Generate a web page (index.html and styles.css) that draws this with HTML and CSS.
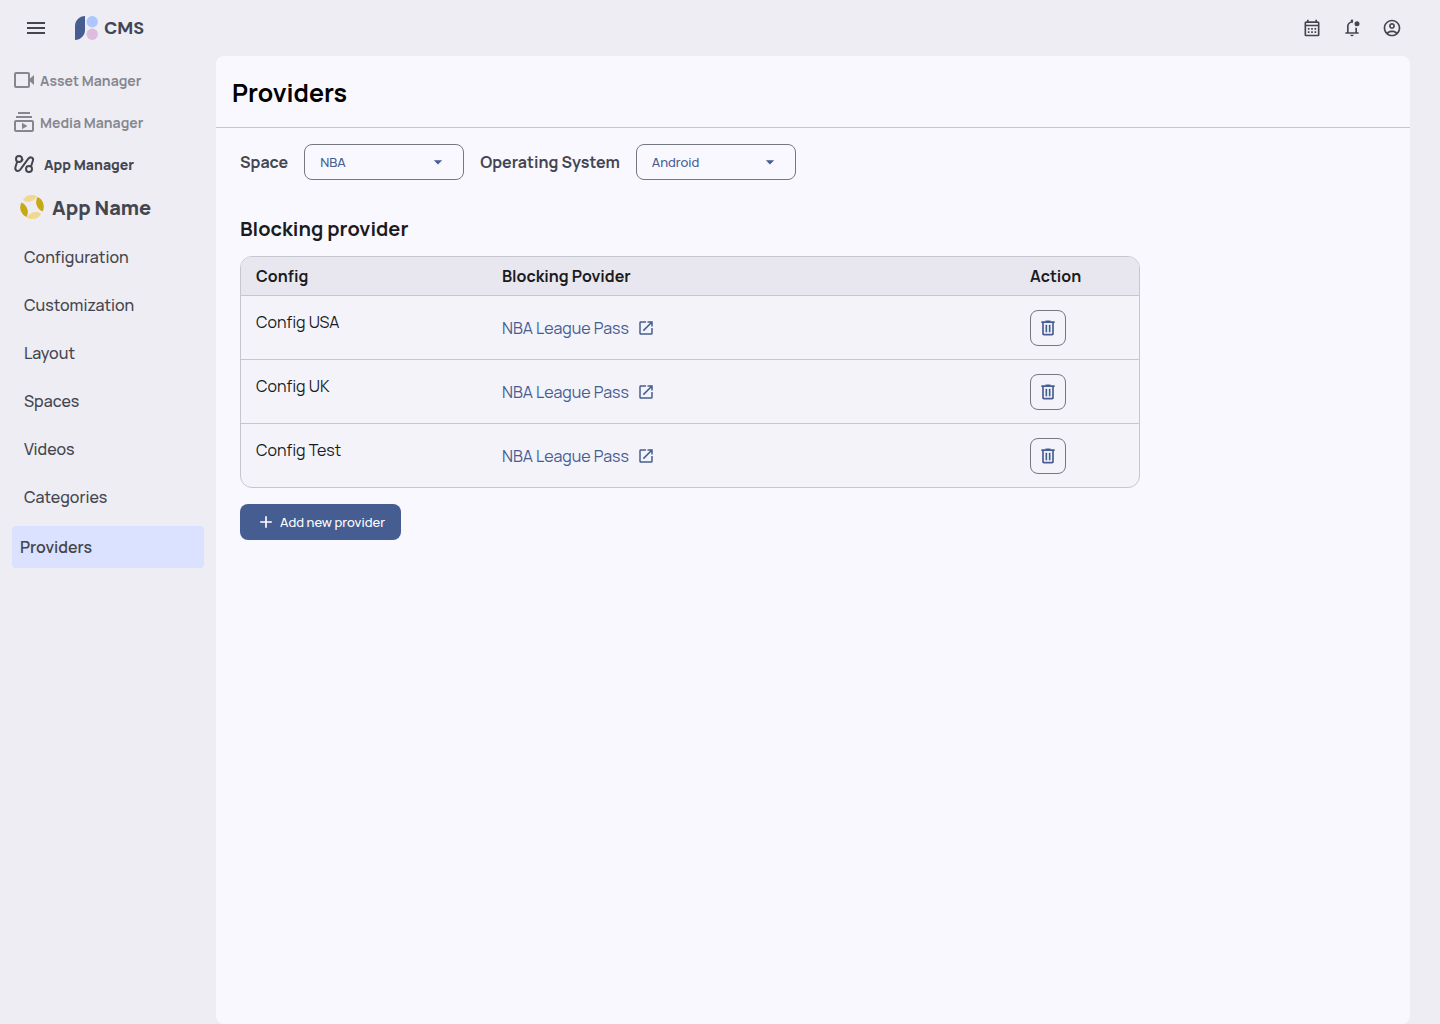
FILE: index.html
```html
<!DOCTYPE html>
<html lang="en">
<head>
  <meta charset="UTF-8" />
  <meta name="viewport" content="width=device-width, initial-scale=1.0"/>
  <title>CMS - Providers</title>
  <link rel="stylesheet" href="styles.css">
</head>
<body>
  <!-- Icons used more than once -->
  <svg class="sprite" aria-hidden="true">
    <symbol id="icon-arrow" viewBox="0 0 24 24"><path d="M7 10l5 5 5-5z"/></symbol>
    <symbol id="icon-open" viewBox="0 0 24 24"><path d="M19 19H5V5h7V3H5c-1.11 0-2 .9-2 2v14c0 1.100.89 2 2 2h14c1.100 0 2-.9 2-2v-7h-2v7zM14 3v2h3.590l-9.830 9.830 1.410 1.410L19 6.410V10h2V3h-7z"/></symbol>
    <symbol id="icon-delete" viewBox="0 0 24 24"><path d="M7 21c-1.100 0-2-.9-2-2V6H4V4h5V3h6v1h5v2h-1v13c0 1.100-.9 2-2 2H7zM17 6H7v13h10V6zM9 17h2V8H9v9zm4 0h2V8h-2v9z"/></symbol>
  </svg>

  <header class="topbar">
    <button class="icon-btn" type="button" aria-label="Menu">
      <svg class="icon" viewBox="0 0 24 24"><path d="M3 18h18v-2H3v2zm0-5h18v-2H3v2zm0-7v2h18V6H3z"/></svg>
    </button>
    <a class="brand" href="#">
      <svg class="brand-logo" viewBox="0 0 24 24">
        <path fill="#465d91" d="M0 24V10C0 4.500 4.500 0 10 0v14c0 5.500-4.500 10-10 10z"/>
        <circle fill="#adc6ff" cx="17.200" cy="5.700" r="5.700"/>
        <circle fill="#debcdf" cx="17.200" cy="18.300" r="5.700"/>
      </svg>
      CMS
    </a>
    <div class="topbar-actions">
      <button class="icon-btn" type="button" aria-label="Calendar">
        <svg class="icon-sm" viewBox="0 0 24 24"><path d="M19 4h-1V2h-2v2H8V2H6v2H5c-1.110 0-1.990.9-1.990 2L3 20c0 1.100.89 2 2 2h14c1.100 0 2-.9 2-2V6c0-1.100-.9-2-2-2zm0 16H5V10h14v10zm0-12H5V6h14v2zM9 14H7v-2h2v2zm4 0h-2v-2h2v2zm4 0h-2v-2h2v2zm-8 4H7v-2h2v2zm4 0h-2v-2h2v2zm4 0h-2v-2h2v2z"/></svg>
      </button>
      <button class="icon-btn" type="button" aria-label="Notifications">
        <svg class="icon-sm" viewBox="0 0 24 24"><path d="M4 19v-2h2v-7c0-2.800 1.900-5.200 4.500-5.800v-.7a1.500 1.500 0 0 1 3-.2A5 5 0 0 0 13 5.900 4 4 0 0 0 8 10v7h8v-5.600a5 5 0 0 0 2 .6v5h2v2H4zm8 3a2 2 0 0 1-2-2h4a2 2 0 0 1-2 2z"/><circle cx="18" cy="7" r="3"/></svg>
      </button>
      <button class="icon-btn" type="button" aria-label="Account">
        <svg class="icon-sm" viewBox="0 0 24 24"><path d="M12 2C6.480 2 2 6.480 2 12s4.480 10 10 10 10-4.480 10-10S17.520 2 12 2zM7.350 18.500C8.660 17.560 10.260 17 12 17s3.340.56 4.650 1.500C15.340 19.440 13.740 20 12 20s-3.340-.56-4.650-1.500zm10.790-1.380C16.450 15.800 14.320 15 12 15s-4.450.8-6.140 2.120C4.700 15.730 4 13.950 4 12c0-4.420 3.580-8 8-8s8 3.580 8 8c0 1.950-.7 3.730-1.860 5.120zM12 6c-1.930 0-3.500 1.570-3.500 3.500S10.070 13 12 13s3.500-1.570 3.500-3.500S13.930 6 12 6zm0 5c-.83 0-1.500-.67-1.500-1.500S11.170 8 12 8s1.500.67 1.500 1.500S12.830 11 12 11z"/></svg>
      </button>
    </div>
  </header>

  <div class="layout">
    <nav class="sidebar">
      <a class="manager-link" href="#">
        <svg class="icon" viewBox="0 0 24 24"><path d="M4 4h12a2 2 0 0 1 2 2v4.500L22 7v10l-4-3.500V18a2 2 0 0 1-2 2H4a2 2 0 0 1-2-2V6a2 2 0 0 1 2-2zm0 2v12h12V6H4z"/></svg>
        Asset Manager
      </a>
      <a class="manager-link" href="#">
        <svg class="icon" viewBox="0 0 24 24"><path d="M20 8H4V6h16v2zm-2-6H6v2h12V2zm4 10v8c0 1.100-.9 2-2 2H4c-1.100 0-2-.9-2-2v-8c0-1.100.9-2 2-2h16c1.100 0 2 .9 2 2zm-2 0H4v8h16v-8zm-10 .7v6.600l5.500-3.300z"/></svg>
        Media Manager
      </a>
      <a class="manager-link current" href="#">
        <svg class="icon icon-line" viewBox="0 0 24 24"><circle cx="7" cy="7" r="3"/><circle cx="17" cy="17" r="3"/><path d="M5.200 9.500L3.500 15c-1 3.500 2.300 5.200 4.600 2.900L16.500 6.500c2-2.300 5.500-.6 4.300 2.500L19 14.500M9.500 9L11 7"/></svg>
        App Manager
      </a>
      <a class="app-name" href="#">
        <svg class="icon" viewBox="0 0 24 24">
          <path fill="#efd992" d="M3 5C6-.5 13-1.500 17 1.500 14 7 7 8.500 3 5z"/>
          <path fill="#c8a915" d="M17.500 2c5.500 2 8 9.500 5 14.500C16.500 13.500 14.500 7 17.500 2z"/>
          <path fill="#efd992" d="M21 19c-3 5.500-10 6.500-14 3.500C10 17 17 15.500 21 19z"/>
          <path fill="#c8a915" d="M6.500 22C1 20-1.500 12.500 1.500 7.500 7.500 10.500 9.500 17 6.500 22z"/>
        </svg>
        App Name
      </a>
      <ul class="menu">
        <li><a href="#">Configuration</a></li>
        <li><a href="#">Customization</a></li>
        <li><a href="#">Layout</a></li>
        <li><a href="#">Spaces</a></li>
        <li><a href="#">Videos</a></li>
        <li><a href="#">Categories</a></li>
        <li><a class="active" href="#">Providers</a></li>
      </ul>
    </nav>

    <main class="panel">
      <div class="panel-header">
        <h1>Providers</h1>
      </div>
      <div class="panel-body">
        <form class="filters">
          <label for="space">Space</label>
          <div class="select">
            <select id="space">
              <option>NBA</option>
            </select>
            <svg class="icon-sm" aria-hidden="true"><use href="#icon-arrow"/></svg>
          </div>
          <label for="os">Operating System</label>
          <div class="select">
            <select id="os">
              <option>Android</option>
              <option>iOS</option>
            </select>
            <svg class="icon-sm" aria-hidden="true"><use href="#icon-arrow"/></svg>
          </div>
        </form>

        <h2>Blocking provider</h2>
        <table class="providers">
          <thead>
            <tr>
              <th class="col-config">Config</th>
              <th>Blocking Povider</th>
              <th class="col-action">Action</th>
            </tr>
          </thead>
          <tbody>
            <tr>
              <td>Config USA</td>
              <td><a class="provider-link" href="#">NBA League Pass <svg class="icon-open"><use href="#icon-open"/></svg></a></td>
              <td><button class="delete-btn" type="button" aria-label="Delete"><svg class="icon-sm"><use href="#icon-delete"/></svg></button></td>
            </tr>
            <tr>
              <td>Config UK</td>
              <td><a class="provider-link" href="#">NBA League Pass <svg class="icon-open"><use href="#icon-open"/></svg></a></td>
              <td><button class="delete-btn" type="button" aria-label="Delete"><svg class="icon-sm"><use href="#icon-delete"/></svg></button></td>
            </tr>
            <tr>
              <td>Config Test</td>
              <td><a class="provider-link" href="#">NBA League Pass <svg class="icon-open"><use href="#icon-open"/></svg></a></td>
              <td><button class="delete-btn" type="button" aria-label="Delete"><svg class="icon-sm"><use href="#icon-delete"/></svg></button></td>
            </tr>
          </tbody>
        </table>
        <button class="add-btn" type="button">
          <svg class="icon-sm" viewBox="0 0 24 24"><path d="M19 13h-6v6h-2v-6H5v-2h6V5h2v6h6v2z"/></svg>
          Add new provider
        </button>
      </div>
    </main>
  </div>
</body>
</html>
```
FILE: styles.css
```css
* {
  box-sizing: border-box;
}

body {
  font-family: 'Manrope', 'Inter', sans-serif;
  font-size: 16px;
  line-height: 24px;
  color: #1a1b20;
  background-color: #eeedf3;
  margin: 0;
}

a {
  color: inherit;
  text-decoration: none;
}

button,
select {
  font-family: inherit;
  cursor: pointer;
}

svg {
  fill: currentColor;
  flex-shrink: 0;
}

.sprite {
  display: none;
}

.icon {
  width: 24px;
  height: 24px;
}

.icon-sm {
  width: 20px;
  height: 20px;
}

.icon-open {
  width: 18px;
  height: 18px;
}

.icon-line {
  fill: none;
  stroke: currentColor;
  stroke-width: 2;
}

/* Top bar */
.topbar {
  display: flex;
  align-items: center;
  height: 56px;
  padding: 0 28px 0 16px;
}

.icon-btn {
  display: flex;
  align-items: center;
  justify-content: center;
  width: 40px;
  height: 40px;
  padding: 0;
  border: none;
  background: none;
  color: #44464f;
}

.brand {
  display: flex;
  align-items: center;
  gap: 5px;
  margin-left: 19px;
  font-family: 'DM Sans', 'Inter', sans-serif;
  font-size: 18px;
  font-weight: 700;
  color: #414659;
}

.brand-logo {
  width: 24px;
  height: 24px;
}

.topbar-actions {
  display: flex;
  margin-left: auto;
}

/* Sidebar */
.layout {
  display: flex;
  min-height: calc(100vh - 56px);
}

.sidebar {
  width: 216px;
  flex-shrink: 0;
  padding: 4px 12px;
  color: #44464f;
}

.sidebar .icon {
  margin-bottom: 2px;
}

.manager-link {
  display: flex;
  align-items: center;
  gap: 4px;
  height: 42px;
  font-size: 14px;
  font-weight: 700;
  color: #86878e;
}

.manager-link.current {
  gap: 8px;
  font-weight: 800;
  color: #44464f;
}

.app-name {
  display: flex;
  align-items: center;
  gap: 8px;
  height: 44px;
  padding-left: 8px;
  font-size: 20px;
  font-weight: 800;
}

.menu {
  list-style: none;
  margin: 3px 0 0;
  padding: 0;
}

.menu a {
  display: block;
  padding: 12px;
  font-weight: 500;
}

.menu a.active {
  margin-top: 5px;
  padding: 9px 8px;
  border-radius: 4px;
  background-color: #dae2ff;
  font-weight: 600;
}

/* Content */
.panel {
  flex: 1;
  margin-right: 30px;
  border-radius: 8px;
  background-color: #faf8ff;
}

.panel-header {
  padding: 21px 16px 18px;
  border-bottom: 1px solid #c5c6d0;
}

.panel-header h1 {
  margin: 0;
  font-size: 25px;
  line-height: 32px;
  font-weight: 700;
  color: #000;
}

.panel-body {
  padding: 16px 24px;
}

.filters {
  display: flex;
  align-items: center;
  gap: 16px;
  color: #44464f;
  font-weight: 700;
}

.select {
  position: relative;
  width: 160px;
  color: #465d91;
}

.select select {
  width: 100%;
  height: 36px;
  padding: 0 40px 0 15px;
  border: 1px solid #757780;
  border-radius: 8px;
  background: none;
  color: inherit;
  font-size: 13px;
  font-weight: 500;
  appearance: none;
}

.select svg {
  position: absolute;
  top: 8px;
  right: 16px;
  pointer-events: none;
}

h2 {
  margin: 36px 0 14px;
  font-size: 20px;
  line-height: 26px;
  font-weight: 700;
}

.providers {
  width: 100%;
  max-width: 900px;
  table-layout: fixed;
  border: 1px solid #c5c6d0;
  border-radius: 12px;
  border-spacing: 0;
  overflow: hidden;
  background-color: #f4f3fa;
}

.providers th {
  padding: 7px 15px;
  background-color: #e8e7ef;
  font-weight: 700;
  text-align: left;
}

.providers td {
  padding: 14px 15px 13px;
  border-top: 1px solid #c5c6d0;
  vertical-align: top;
}

.col-config {
  width: 246px;
}

.col-action {
  width: 124px;
}

.provider-link {
  display: flex;
  align-items: center;
  gap: 8px;
  height: 36px;
  color: #465d91;
}

.delete-btn {
  display: flex;
  align-items: center;
  justify-content: center;
  width: 36px;
  height: 36px;
  padding: 0;
  border: 1px solid #757780;
  border-radius: 8px;
  background: none;
  color: #465d91;
}

.add-btn {
  display: flex;
  align-items: center;
  gap: 4px;
  height: 36px;
  margin-top: 16px;
  padding: 0 16px;
  border: none;
  border-radius: 8px;
  background-color: #465d91;
  color: #fff;
  font-size: 13px;
  font-weight: 500;
}
```
